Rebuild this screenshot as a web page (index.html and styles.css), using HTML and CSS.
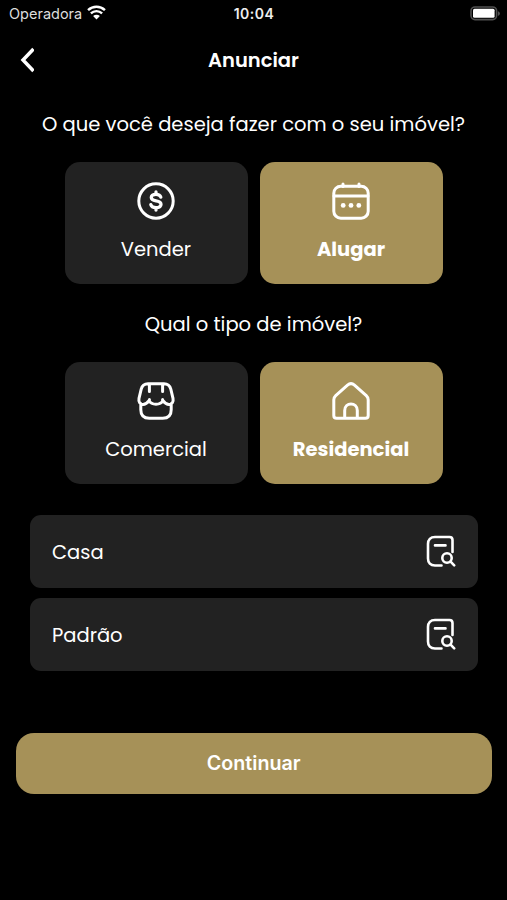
FILE: index.html
```
<!DOCTYPE html>
<html lang="pt-BR">
<head>
<meta charset="utf-8">
<meta name="viewport" content="width=device-width, initial-scale=1">
<title>Anunciar</title>
<link rel="stylesheet" href="styles.css">
</head>
<body>
<div class="status">
  <div class="carrier"><span>Operadora</span>
    <svg class="wifi" viewBox="0 0 18 14" width="19" height="15"><path d="M1 4.8C5.6.5 12.4.5 17 4.8M3.7 7.8c3-2.8 7.6-2.8 10.6 0" fill="none" stroke="#fff" stroke-width="2.3"/><path d="M9 13.6 5.8 10.4c1.8-1.6 4.6-1.6 6.4 0z" fill="#fff"/></svg>
  </div>
  <div class="clock">10:04</div>
  <svg class="battery" viewBox="0 0 31 15" width="31" height="15"><rect x="1" y="1" width="25.6" height="12.6" rx="4" fill="none" stroke="#505050" stroke-width="1.6"/><rect x="3" y="2.8" width="21.6" height="9" rx="1.5" fill="#fff"/><path d="M28 5.2c2.6 1 2.6 3.6 0 4.6z" fill="#505050"/></svg>
</div>
<header class="topbar">
  <svg class="back" viewBox="0 0 16 26" width="16" height="26"><path d="M15.5 2 5 13l10.5 11" fill="none" stroke="#fff" stroke-width="3.5"/></svg>
  <h1 class="title">Anunciar</h1>
</header>
<main class="form">
  <h2 class="question question-goal">O que você deseja fazer com o seu imóvel?</h2>
  <div class="options">
    <button class="option">
      <svg class="icon" viewBox="0 0 40 40"><circle cx="20" cy="20" r="17.2"/><path class="dollar" d="M24.8 16.1c-.6-2-2.1-2.8-4.8-2.8-2.9 0-4.7 1.2-4.7 3.2 0 2.2 2.1 2.9 4.7 3.3 3 .5 5 1.1 5 3.4 0 2.1-1.9 3.4-5 3.4-2.9 0-4.7-1-5.2-3M20 10.9v2.4M20 26.6V29"/></svg>
      <span class="label">Vender</span>
    </button>
    <button class="option selected">
      <svg class="icon" viewBox="0 0 40 40"><rect x="2.8" y="5.2" width="34.4" height="32" rx="7"/><path d="M3 15.1h34M12 3v2.6M28 3v2.6"/><g class="dots"><circle cx="12.2" cy="24.4" r="2.4"/><circle cx="20" cy="24.4" r="2.4"/><circle cx="27.8" cy="24.4" r="2.4"/></g></svg>
      <span class="label">Alugar</span>
    </button>
  </div>
  <h2 class="question question-type">Qual o tipo de imóvel?</h2>
  <div class="options">
    <button class="option">
      <svg class="icon" viewBox="0 0 40 40"><path d="M12 2.8h16c4 0 5.8 1.5 6.8 5.4l2.2 9.2c.7 3.6-1 6-4 6-2.6 0-4.2-1.2-6-3.8-2.6 4.8-11.4 4.8-14 0-1.8 2.6-3.4 3.8-6 3.8-3 0-4.7-2.4-4-6l2.2-9.2c1-3.9 2.8-5.4 6.8-5.4zM13.4 3v7.6M26.6 3v7.6M13.4 18.4v1.8M26.6 18.4v1.8M4.8 22.5v6.2c0 5.8 2.7 8.5 8.5 8.5h13.4c5.8 0 8.5-2.7 8.5-8.5v-6.2"/></svg>
      <span class="label">Comercial</span>
    </button>
    <button class="option selected">
      <svg class="icon" viewBox="0 0 40 40"><path d="M5.6 37.2h28.8c1.7 0 2.8-1.1 2.8-2.8V18.8c0-1.8-.6-3-1.9-4.2L23.5 4.1c-2.1-1.8-4.9-1.8-7 0L4.7 14.6c-1.3 1.2-1.9 2.4-1.9 4.2v15.6c0 1.7 1.1 2.8 2.8 2.8zM13.7 37v-7.4c0-8.8 12.6-8.8 12.6 0V37"/></svg>
      <span class="label">Residencial</span>
    </button>
  </div>
  <div class="fields">
    <div class="field"><span>Casa</span>
      <svg class="search" viewBox="0 0 30 33"><path d="M15.5 30.5H9c-4.5 0-7-2.5-7-7V9c0-4.5 2.5-7 7-7h14.5c2 0 3 1 3 3v12M9 10.4h10.5"/><circle cx="21" cy="23" r="4.7"/><path d="m24.6 26.6 3.6 3.7"/></svg>
    </div>
    <div class="field"><span>Padrão</span>
      <svg class="search" viewBox="0 0 30 33"><path d="M15.5 30.5H9c-4.5 0-7-2.5-7-7V9c0-4.5 2.5-7 7-7h14.5c2 0 3 1 3 3v12M9 10.4h10.5"/><circle cx="21" cy="23" r="4.7"/><path d="m24.6 26.6 3.6 3.7"/></svg>
    </div>
  </div>
  <button class="continue"><span>Continuar</span></button>
</main>
</body>
</html>
```
FILE: styles.css
```
* { box-sizing: border-box; }
body {
  margin: 0;
  min-height: 900px;
  background: #000;
  color: #fff;
  font-family: Poppins, Inter, sans-serif;
}
button { border: 0; padding: 0; color: inherit; font: inherit; }
.status {
  height: 28px;
  display: grid;
  grid-template-columns: 1fr auto 1fr;
  align-items: center;
  padding: 0 6px 2px 9px;
  font-family: Inter, sans-serif;
}
.carrier { display: flex; align-items: center; gap: 5px; color: #ddd; font-size: 14.5px; }
.wifi { margin-top: -1px; }
.clock { font-weight: 600; font-size: 14px; letter-spacing: .5px; color: #eee; margin-left: -2px; }
.battery { justify-self: end; }
.topbar {
  height: 64px;
  display: grid;
  grid-template-columns: 40px 1fr 40px;
  align-items: center;
  padding: 0 18px;
}
.title { margin: 0; text-align: center; font-size: 19.5px; font-weight: 600; }
.question { margin: 0; text-align: center; font-size: 19.55px; font-weight: 400; line-height: 30px; white-space: nowrap; }
.question-goal { margin: 17px 0 23.4px; }
.question-type { margin: 25px 0 23px; }
.options { display: flex; justify-content: center; gap: 12px; }
.option {
  width: 183px;
  height: 122px;
  border-radius: 15px;
  background: #222;
  display: flex;
  flex-direction: column;
  align-items: center;
  padding-top: 19px;
}
.selected { background: #a69158; font-weight: 700; }
.icon { width: 40px; height: 40px; fill: none; stroke: #fff; stroke-width: 3; stroke-linecap: round; stroke-linejoin: round; }
.dollar { stroke-width: 3.3; }
.dots { fill: #fff; stroke: none; }
.label { margin-top: 14px; font-size: 19.5px; line-height: 30px; }
.fields { margin: 31px 29.5px 0 30px; display: grid; gap: 10px; }
.field {
  height: 73px;
  border-radius: 11px;
  background: #222;
  display: flex;
  align-items: center;
  justify-content: space-between;
  padding: 2px 21.5px 0 22px;
  font-size: 19.5px;
}
.search { width: 30px; height: 33px; margin-top: -2px; fill: none; stroke: #fff; stroke-width: 2.6; stroke-linecap: round; stroke-linejoin: round; }
.continue {
  display: block;
  width: 476.5px;
  height: 61px;
  margin: 61.5px 0 0 15.5px;
  border-radius: 18px;
  background: #a69158;
  font-family: Inter, sans-serif;
  font-size: 19.7px;
  font-weight: 600;
}
```
